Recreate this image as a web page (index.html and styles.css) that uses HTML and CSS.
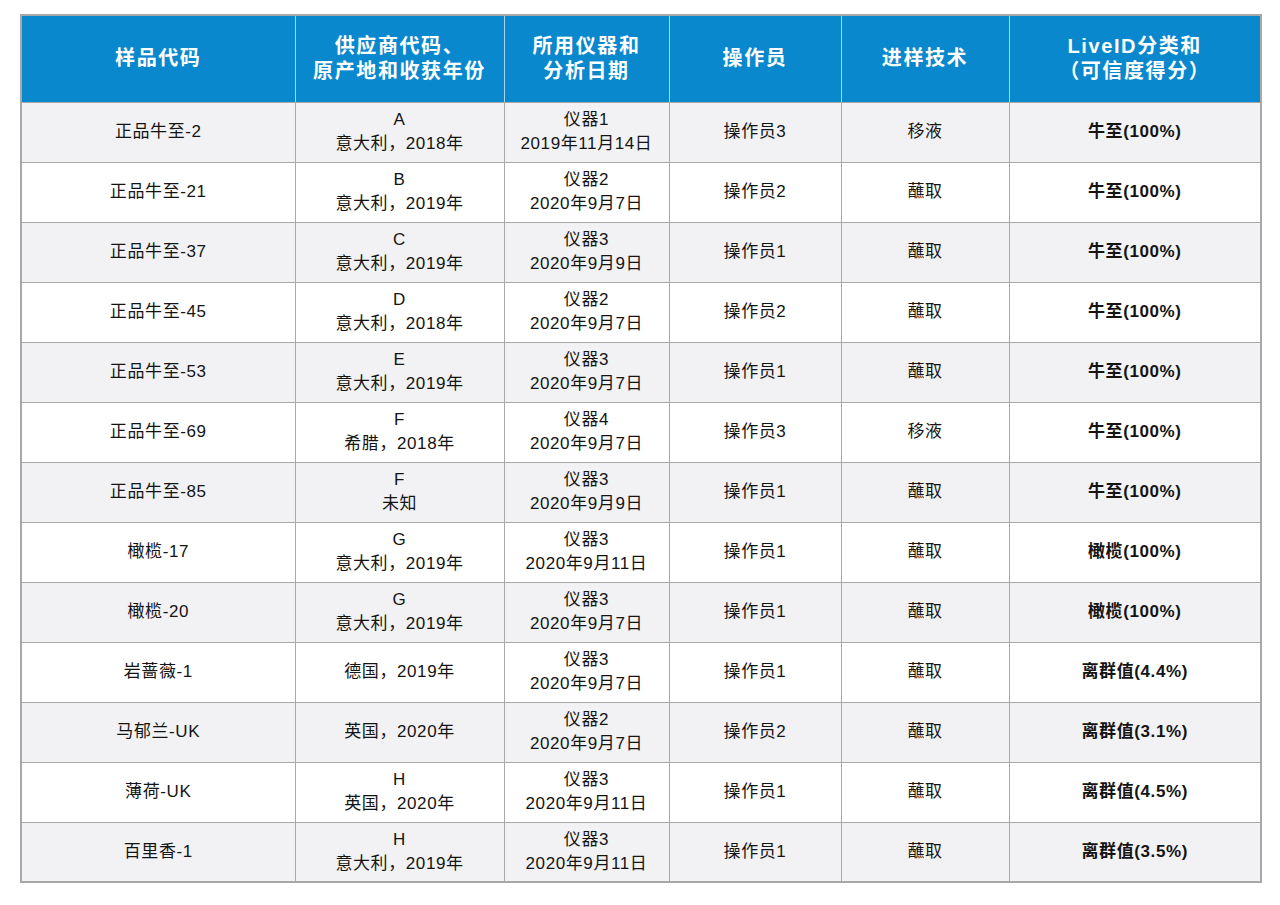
FILE: index.html
```html
<!DOCTYPE html>
<html lang="zh">
<head>
<meta charset="utf-8">
<link rel="stylesheet" href="styles.css">
</head>
<body>
<div class="page">
<table class="data">
<colgroup>
<col class="c1"><col class="c2"><col class="c3"><col class="c4"><col class="c5"><col class="c6">
</colgroup>
<thead>
<tr>
<th>样品代码</th>
<th>供应商代码、<br>原产地和收获年份</th>
<th>所用仪器和<br>分析日期</th>
<th>操作员</th>
<th>进样技术</th>
<th>LiveID分类和<br>（可信度得分）</th>
</tr>
</thead>
<tbody>
<tr><td>正品牛至-2</td><td>A<br>意大利，2018年</td><td>仪器1<br>2019年11月14日</td><td>操作员3</td><td>移液</td><td class="b">牛至(100%)</td></tr>
<tr><td>正品牛至-21</td><td>B<br>意大利，2019年</td><td>仪器2<br>2020年9月7日</td><td>操作员2</td><td>蘸取</td><td class="b">牛至(100%)</td></tr>
<tr><td>正品牛至-37</td><td>C<br>意大利，2019年</td><td>仪器3<br>2020年9月9日</td><td>操作员1</td><td>蘸取</td><td class="b">牛至(100%)</td></tr>
<tr><td>正品牛至-45</td><td>D<br>意大利，2018年</td><td>仪器2<br>2020年9月7日</td><td>操作员2</td><td>蘸取</td><td class="b">牛至(100%)</td></tr>
<tr><td>正品牛至-53</td><td>E<br>意大利，2019年</td><td>仪器3<br>2020年9月7日</td><td>操作员1</td><td>蘸取</td><td class="b">牛至(100%)</td></tr>
<tr><td>正品牛至-69</td><td>F<br>希腊，2018年</td><td>仪器4<br>2020年9月7日</td><td>操作员3</td><td>移液</td><td class="b">牛至(100%)</td></tr>
<tr><td>正品牛至-85</td><td>F<br>未知</td><td>仪器3<br>2020年9月9日</td><td>操作员1</td><td>蘸取</td><td class="b">牛至(100%)</td></tr>
<tr><td>橄榄-17</td><td>G<br>意大利，2019年</td><td>仪器3<br>2020年9月11日</td><td>操作员1</td><td>蘸取</td><td class="b">橄榄(100%)</td></tr>
<tr><td>橄榄-20</td><td>G<br>意大利，2019年</td><td>仪器3<br>2020年9月7日</td><td>操作员1</td><td>蘸取</td><td class="b">橄榄(100%)</td></tr>
<tr><td>岩蔷薇-1</td><td>德国，2019年</td><td>仪器3<br>2020年9月7日</td><td>操作员1</td><td>蘸取</td><td class="b">离群值(4.4%)</td></tr>
<tr><td>马郁兰-UK</td><td>英国，2020年</td><td>仪器2<br>2020年9月7日</td><td>操作员2</td><td>蘸取</td><td class="b">离群值(3.1%)</td></tr>
<tr><td>薄荷-UK</td><td>H<br>英国，2020年</td><td>仪器3<br>2020年9月11日</td><td>操作员1</td><td>蘸取</td><td class="b">离群值(4.5%)</td></tr>
<tr><td>百里香-1</td><td>H<br>意大利，2019年</td><td>仪器3<br>2020年9月11日</td><td>操作员1</td><td>蘸取</td><td class="b">离群值(3.5%)</td></tr>
</tbody>
</table>
</div>
</body>
</html>
```
FILE: styles.css
```css
html, body {
  margin: 0;
  padding: 0;
  background: #ffffff;
}
.page {
  padding: 14px 0 0 20px;
  font-family: "Liberation Sans", "Noto Sans CJK SC", sans-serif;
  color: #141414;
}
.data {
  border-collapse: collapse;
  table-layout: fixed;
  width: 1240px;
  border: 2px solid #a8a8a8;
}
.c1 { width: 274px; }
.c2 { width: 209px; }
.c3 { width: 165px; }
.c4 { width: 172px; }
.c5 { width: 168px; }
.c6 { width: 252px; }
.data th {
  background: #0a88cd;
  color: #ffffff;
  font-size: 20px;
  font-weight: bold;
  letter-spacing: 1.6px;
  line-height: 25px;
  height: 87px;
  padding: 0;
  text-align: center;
  vertical-align: middle;
  border-left: 1.5px solid #a8d4ef;
  border-right: 1.5px solid #a8d4ef;
  border-bottom: 1.5px solid #a8a8a8;
  box-sizing: border-box;
}
.data th:first-child { border-left: none; }
.data th:last-child { border-right: none; }
.data td {
  height: 60px;
  padding: 0;
  font-size: 17px;
  letter-spacing: 0.6px;
  line-height: 24px;
  text-align: center;
  vertical-align: middle;
  border: 1.5px solid #a8a8a8;
  box-sizing: border-box;
}
.data tbody tr:nth-child(odd) td { background: #f2f2f4; }
.data tbody tr:nth-child(even) td { background: #ffffff; }
.data td.b { font-weight: bold; }
```
